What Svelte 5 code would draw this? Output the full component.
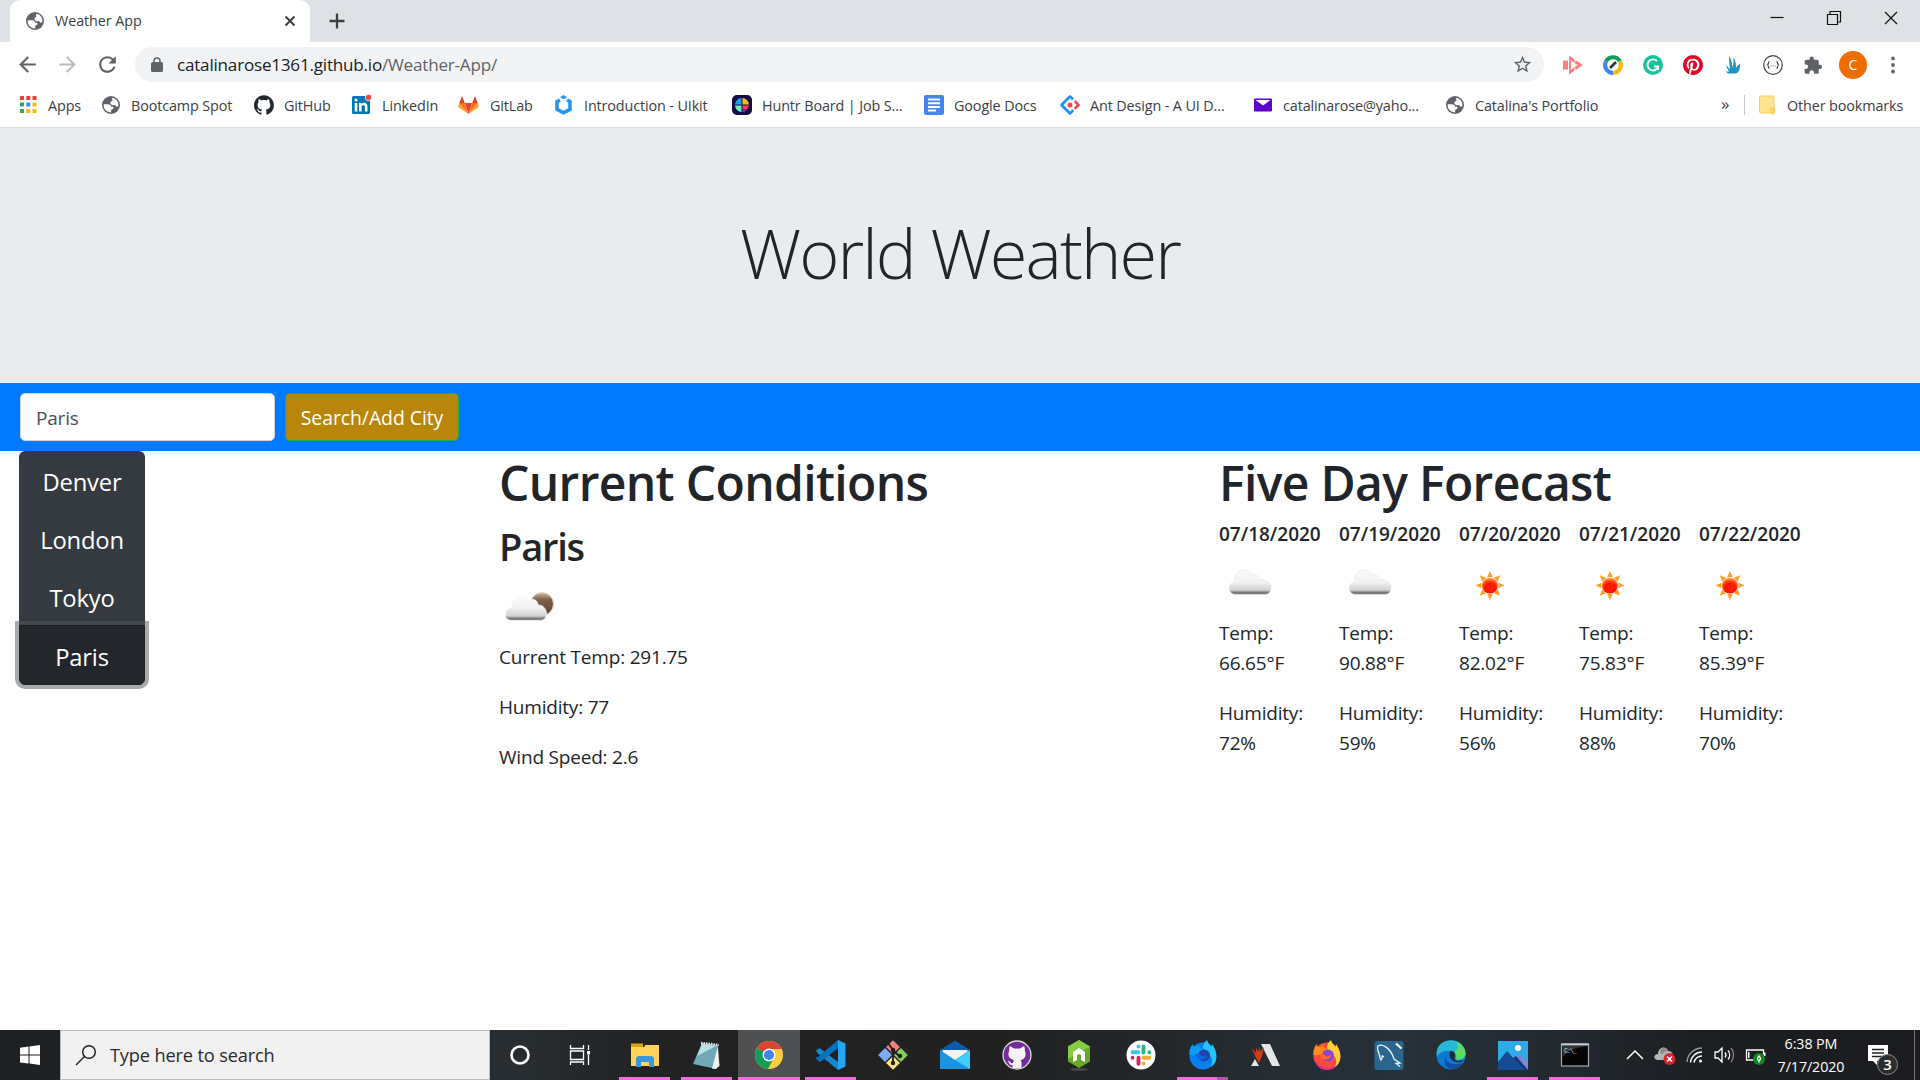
<script>
  const bookmarks = [
    ['apps', 'Apps'],
    ['globe', 'Bootcamp Spot'],
    ['github', 'GitHub'],
    ['linkedin', 'LinkedIn'],
    ['gitlab', 'GitLab'],
    ['uikit', 'Introduction - UIkit'],
    ['huntr', 'Huntr Board | Job S...'],
    ['docs', 'Google Docs'],
    ['ant', 'Ant Design - A UI D...'],
    ['yahoo', 'catalinarose@yaho...'],
    ['globe', "Catalina's Portfolio"]
  ];
  const extensions = ['cast', 'checker', 'grammarly', 'pinterest', 'flame', 'braces', 'puzzle'];
  const cities = ['Denver', 'London', 'Tokyo', 'Paris'];
  const forecast = [
    { date: '07/18/2020', sky: 'cloud', temp: '66.65', humidity: 72 },
    { date: '07/19/2020', sky: 'cloud', temp: '90.88', humidity: 59 },
    { date: '07/20/2020', sky: 'sun', temp: '82.02', humidity: 56 },
    { date: '07/21/2020', sky: 'sun', temp: '75.83', humidity: 88 },
    { date: '07/22/2020', sky: 'sun', temp: '85.39', humidity: 70 }
  ];
  const tasks = [
    ['explorer', 'open'],
    ['notepad', 'open'],
    ['chrome', 'active'],
    ['vscode', 'open'],
    ['git', ''],
    ['mail', ''],
    ['desktop', ''],
    ['node', ''],
    ['slack', ''],
    ['foxdev', 'open multi'],
    ['arena', ''],
    ['firefox', ''],
    ['mysql', ''],
    ['edge', ''],
    ['photos', 'open'],
    ['cmd', 'open']
  ];
  const octocat =
    'M12 .297c-6.63 0-12 5.373-12 12 0 5.303 3.438 9.8 8.205 11.385.6.113.82-.258.82-.577 0-.285-.01-1.04-.015-2.04-3.338.724-4.042-1.61-4.042-1.61C4.422 18.07 3.633 17.7 3.633 17.7c-1.087-.744.084-.729.084-.729 1.205.084 1.838 1.236 1.838 1.236 1.07 1.835 2.809 1.305 3.495.998.108-.776.417-1.305.76-1.605-2.665-.3-5.466-1.332-5.466-5.93 0-1.31.465-2.38 1.235-3.22-.135-.303-.54-1.523.105-3.176 0 0 1.005-.322 3.3 1.23.96-.267 1.98-.399 3-.405 1.02.006 2.04.138 3 .405 2.28-1.552 3.285-1.23 3.285-1.23.645 1.653.24 2.873.12 3.176.765.84 1.23 1.91 1.23 3.22 0 4.61-2.805 5.625-5.475 5.92.42.36.81 1.096.81 2.22 0 1.606-.015 2.896-.015 3.286 0 .315.21.69.825.57C20.565 22.092 24 17.592 24 12.297c0-6.627-5.373-12-12-12';
</script>

{#snippet small(name)}
  <svg class="ico" viewBox="0 0 20 20">
    {#if name === 'globe'}
      <circle cx="10" cy="10" r="9" fill="#5f6368" />
      <path fill="#fff" d="M2.700 9.200H7c2 0 3 .8 3.200 2.600h2.200c.4 1.800-.5 2.600-2.200 2.900v2.800C5.500 17.500 2.200 13.600 2.700 9.200M11.600 2.700C15.500 3.400 18 7 17.300 11.200c-1.600.9-2.600.3-3.300-1.100-2 .3-3.800.1-4.500-1.600-.3-1.400.4-2.200 2-2.400-.900-1.200-.600-2.300.100-3.400" />
    {:else if name === 'apps'}
      <g fill="#ea4335"><path d="M2 1h4v4H2zM8.300 1h4v4h-4zM14.500 1h4v4h-4z" /></g>
      <g fill="#34a853"><path d="M2 7.500h4v4H2zM2 14h4v4H2z" /></g>
      <path fill="#4285f4" d="M8.300 7.500h4v4h-4z" />
      <path fill="#fbbc04" d="M14.500 7.500h4v4h-4zM8.300 14h4v4h-4zM14.500 14h4v4h-4z" />
    {:else if name === 'github'}
      <path transform="scale(.83)" fill="#24292e" d={octocat} />
    {:else if name === 'linkedin'}
      <rect x="0" y="1" width="18" height="18" rx="1.500" fill="#0077b5" />
      <path fill="#fff" d="M2.700 8h2.600v8.500H2.700zM7 8h2.500v1.200c1.400-2.200 6-2 6 2.400v4.900h-2.600V12c0-2.500-3.300-2.300-3.300 0v4.500H7z" />
      <circle cx="4" cy="5" r="1.500" fill="#fff" />
      <circle cx="16.500" cy="2.500" r="3.200" fill="#e8453c" stroke="#fff" stroke-width=".8" />
    {:else if name === 'gitlab'}
      <path fill="#e24329" d="M8.500 19L4.800 8h7.400z" />
      <path fill="#fc6d26" d="M8.500 19L-1 8h5.800zM8.500 19L18 8h-5.800z" />
      <path fill="#fca326" d="M8.500 19L-1.800 12 -.700 8zM8.500 19L18.800 12 17.700 8z" />
      <path fill="#e24329" d="M-.700 8L2 1l2.800 7zM17.700 8L15 1l-2.800 7z" />
    {:else if name === 'uikit'}
      <path fill="none" stroke="#2396f3" stroke-width="3.600" d="M6 5L3 6.800v7.500l6.500 3.500 6.500-3.500V6.500l-4-2.200" />
      <path fill="#2396f3" d="M6 2.200L9.500 0 13 2.200 9.500 4.300z" />
      <path stroke="#fff" stroke-width="1.200" d="M11.500 6.500L15 1" />
    {:else if name === 'huntr'}
      <rect width="20" height="20" rx="5" fill="#170b45" />
      <path fill="#12a5e8" d="M9.500 3v6.500H3A7 7 0 0 1 9.500 3" />
      <path fill="#ffbe0b" d="M10.500 3v6.500H17A7 7 0 0 0 10.500 3" />
      <path fill="#6df0c2" d="M9.500 10.500H3a7 7 0 0 0 6.500 6.500" />
      <path fill="#ff3764" d="M10.500 10.500H17l-2 4h-4.500z" />
      <path fill="#7a4df2" d="M10.500 15.200h4a7 7 0 0 1-4 1.800z" />
    {:else if name === 'docs'}
      <rect width="20" height="20" rx="2" fill="#4285f4" />
      <path stroke="#fff" stroke-width="2" d="M4 4.500h12M4 8.200h12M4 11.900h12M4 15.600h8" />
    {:else if name === 'ant'}
      <path fill="none" stroke="#1890ff" stroke-width="2.600" stroke-linejoin="round" d="M13 4.300L10 1.500 1.500 10l8.500 8.500 3.300-3.300" />
      <path fill="none" stroke="#f5424f" stroke-width="2.600" stroke-linecap="round" d="M15.500 6.800l3 3.200-3 3.200" />
      <circle cx="10" cy="10" r="2.500" fill="#f5424f" />
    {:else if name === 'yahoo'}
      <rect x="1" y="3.500" width="18" height="13" rx="1" fill="#5f01d1" />
      <path fill="#fff" d="M2.500 5h15L10 10.500z" />
    {:else if name === 'cast'}
      <path fill="#ff7e7e" d="M0 5.500h5v9H0zM6 .500L19.800 10 6 19.500v-5h2.200l6.300-4.500-6.300-4.500H6z" />
      <path fill="#ff7e7e" d="M6 5.500h2v9H6z" />
      <path stroke="#fff" d="M12 4v3M12 13v3" />
    {:else if name === 'checker'}
      <g fill="none" stroke-width="4">
        <path stroke="#109d58" d="M3 6.300a8 8 0 0 1 14 0" />
        <path stroke="#fbb905" d="M17 6.300A8 8 0 0 1 10 18" />
        <path stroke="#4285f4" d="M10 18A8 8 0 0 1 3 6.300" />
      </g>
      <path stroke="#333" stroke-width="2.700" d="M7 13l6-6" />
    {:else if name === 'grammarly'}
      <circle cx="10" cy="10" r="10" fill="#15c39a" />
      <path fill="none" stroke="#fff" stroke-width="1.900" d="M14 6.100A5.500 5.500 0 1 0 15.300 11.500H11M15 10.800V15" />
    {:else if name === 'pinterest'}
      <path transform="scale(.833)" fill="#e60023" d="M12.017 0C5.396 0 .029 5.367.029 11.987c0 5.079 3.158 9.417 7.618 11.162-.105-.949-.199-2.403.041-3.439.219-.937 1.406-5.957 1.406-5.957s-.359-.72-.359-1.781c0-1.663.967-2.911 2.168-2.911 1.024 0 1.518.769 1.518 1.688 0 1.029-.653 2.567-.992 3.992-.285 1.193.6 2.165 1.775 2.165 2.128 0 3.768-2.245 3.768-5.487 0-2.861-2.063-4.869-5.008-4.869-3.41 0-5.409 2.562-5.409 5.199 0 1.033.394 2.143.889 2.741.099.12.112.225.085.345-.09.375-.293 1.199-.334 1.363-.053.225-.172.271-.401.165-1.495-.69-2.433-2.878-2.433-4.646 0-3.776 2.748-7.252 7.92-7.252 4.158 0 7.392 2.967 7.392 6.923 0 4.135-2.607 7.462-6.233 7.462-1.214 0-2.354-.629-2.758-1.379l-.749 2.848c-.269 1.045-1.004 2.352-1.498 3.146 1.123.345 2.306.535 3.55.535 6.607 0 11.985-5.365 11.985-11.987C23.97 5.39 18.592.026 11.985.026L12.017 0z" />
    {:else if name === 'flame'}
      <path fill="#1f93c4" d="M6.500 1c2 4 2.500 8 3 11.500C10.500 9 10.800 6 10.300 2.500c2.500 3.500 3 7 2.500 10.500 1.500-2 2.700-3 4.500-4.500-.300 5-1 9.500-5 10H5L3 16.500h3.500C4.500 15 3.500 12.500 3.500 9.500c1 2 2 3.500 3.500 5C6.500 10 5.500 5 6.500 1" />
    {:else if name === 'braces'}
      <circle cx="10" cy="10" r="9.300" fill="#fff" stroke="#444" stroke-width="1.200" />
      <path fill="none" stroke="#444" stroke-width="1.200" d="M6.500 6.500C4.500 6.500 6.500 10 4 10c2.500 0 .500 3.500 2.500 3.500M13.500 6.500c2 0 0 3.500 2.500 3.500-2.500 0-.500 3.500-2.500 3.500" />
      <path stroke="#777" d="M7.500 11h1M9.600 11h1M11.700 11h1" />
    {:else if name === 'puzzle'}
      <path transform="translate(0 .600) scale(.83)" fill="#5f6368" d="M20.500 11H19V7c0-1.100-.9-2-2-2h-4V3.500C13 2.120 11.880 1 10.500 1S8 2.120 8 3.500V5H4c-1.100 0-1.990.9-1.990 2v3.800H3.500c1.490 0 2.700 1.210 2.700 2.700s-1.210 2.700-2.700 2.700H2V20c0 1.100.9 2 2 2h3.800v-1.500c0-1.490 1.210-2.700 2.700-2.700 1.490 0 2.700 1.210 2.700 2.700V22H17c1.100 0 2-.9 2-2v-4h1.500c1.380 0 2.500-1.120 2.500-2.500S21.880 11 20.500 11z" />
    {/if}
  </svg>
{/snippet}

{#snippet weather(kind)}
  <svg class="sky" viewBox="0 0 62 62">
    <defs>
      <linearGradient id="cloudFill" x1="0" y1="0" x2="0" y2="1">
        <stop offset="0" stop-color="#fbfbfb" /><stop offset=".5" stop-color="#f1f1f1" />
        <stop offset=".82" stop-color="#d2d2d2" /><stop offset=".92" stop-color="#777" /><stop offset="1" stop-color="#888" />
      </linearGradient>
      <linearGradient id="moonFill" x1="0" y1="0" x2="0" y2="1">
        <stop offset="0" stop-color="#d8bea8" /><stop offset=".3" stop-color="#806149" /><stop offset="1" stop-color="#59402e" />
      </linearGradient>
      <radialGradient id="sunFill" cx=".5" cy=".7" r=".7">
        <stop offset=".5" stop-color="#ff1800" /><stop offset=".75" stop-color="#ff5a10" /><stop offset="1" stop-color="#ffc070" />
      </radialGradient>
    </defs>
    {#if kind === 'night'}
      <circle cx="43" cy="24" r="11.500" fill="url(#moonFill)" stroke="#e8d9cc" />
      <path fill="url(#cloudFill)" stroke="#fff" stroke-width=".6" d="M13 40.500c-9 0-9-11-1-13C13 14 26 12 30 20c4-2 9 0 9 5 9-1 13 15 2 15.500z" />
    {:else if kind === 'cloud'}
      <path fill="url(#cloudFill)" stroke="#e3e3e3" stroke-width=".6" d="M16 38.500c-8-1-7-11.500-.500-13C16 12.500 28 10.500 32 18.500c4-1.500 7 0 8 5 6-.500 11 2 12 7 0 5-2 7.500-5 8z" />
    {:else}
      <g transform="translate(0 -1)">
        <path fill="#ff9f2e" d="M31 16l2.800 6h-5.600zM31 45l2.800-6h-5.600zM16.500 30.500l6-2.800v5.600zM45.500 30.500l-6-2.800v5.600zM20.800 20.300l6.400 2.400-4 4zM41.200 20.300l-6.400 2.400 4 4zM20.800 40.700l6.400-2.400-4-4zM41.200 40.700l-6.400-2.400 4-4z" />
        <circle cx="31" cy="30.500" r="8" fill="url(#sunFill)" />
      </g>
    {/if}
  </svg>
{/snippet}

{#snippet app(name)}
  <svg class="app" viewBox="0 0 30 30">
    {#if name === 'explorer'}
      <path fill="#e0a10a" d="M1 3.500h12v5H1z" />
      <path fill="#ffd35c" d="M1 7h13l1.500-2H29v21H1z" />
      <path fill="#3b97dd" d="M6 27V18l2-2h14l2 2v9h-5v-5h-8v5z" />
    {:else if name === 'notepad'}
      <path fill="#a88b52" d="M25 4l3 22-5 2z" />
      <path fill="#71a9b8" d="M10 3l-9 21 21 4.500L26 5z" />
      <path fill="#b9dde4" d="M10 4l-5 12 19-10z" />
      <path fill="#eef4f5" d="M20 28.500L26 6l1 20-3 3z" />
      <path stroke="#e8e8e8" stroke-width="2.500" stroke-dasharray="1.500 1" d="M9 3l18 2" />
    {:else if name === 'chrome'}
      <circle cx="15" cy="15" r="14" fill="#ffcd40" />
      <path fill="#db4437" d="M15 15L2.900 8A14 14 0 0 1 27.600 9H15z" />
      <path fill="#109d58" d="M15 15L2.900 8A14 14 0 0 0 14 29l5.500-10.500z" />
      <circle cx="15" cy="15" r="6.500" fill="#fff" /><circle cx="15" cy="15" r="5.100" fill="#4285f4" />
    {:else if name === 'vscode'}
      <path fill="#0b75bd" d="M22 0L3 18.500 0 16.500 1 20l3 2L22 8z" />
      <path fill="#1588ce" d="M0 10.500L3.500 8 22 22v8L1.500 13z" />
      <path fill="#0071ba" d="M0 18.500L22 0v8L4 22z" />
      <path fill="#27a6f2" d="M22 0l7.500 3.500v23L22 30z" />
    {:else if name === 'git'}
      <g transform="rotate(45 15 15)">
        <path fill="#f28080" d="M4.500 4.500h9.800v9.800H4.500z" /><path fill="#84cf5c" d="M15.700 4.500h9.800v9.800h-9.800z" />
        <path fill="#7eacf5" d="M4.500 15.700h9.800v9.800H4.500z" /><path fill="#ffe27a" d="M15.700 15.700h9.800v9.800h-9.800z" />
      </g>
      <path fill="none" stroke="#1d1d1d" stroke-width="1.800" d="M10 3l5 7v13M15 10l6 6" />
      <g fill="#1d1d1d"><circle cx="15" cy="10" r="2.200" /><circle cx="22" cy="16" r="2.200" /><circle cx="15" cy="23" r="2.200" /></g>
    {:else if name === 'mail'}
      <path fill="#0a5bab" d="M0 10L15 .500 30 10v6H0z" />
      <path fill="#f3f3f3" d="M2.500 10h25v10h-25z" />
      <path fill="#1a94e0" d="M0 10v19h30V10L15 20z" />
      <path fill="#40cdfb" d="M30 10v19L15 20z" />
    {:else if name === 'desktop'}
      <circle cx="15" cy="15" r="14" fill="#752b9a" stroke="#ddd" stroke-width="1.300" />
      <path fill="#f4f4f4" d="M8 6l4 2.500h6L22 6c1 2 1 3 .800 4.500C25 17 22 19 18.500 20c1.500 2 1 5 1 8h-9v-3c-4 .500-3-3-5-4 3-.500 3 3 5.500 2 0-1 .500-2 1-3C7.500 19 5 16 7.200 10.500 7 9 7 8 8 6" />
    {:else if name === 'node'}
      <ellipse cx="15" cy="29.500" rx="9" ry="1.500" fill="#474947" />
      <path fill="#65ab27" d="M15 0l11 6.500v15L15 28 4 21.500v-15z" />
      <path fill="#86cc45" d="M15 0l11 6.500L4 19V6.500z" />
      <path fill="#fff" d="M9 12l6-4 6 4v10l-4-2v-5l-2-1-2 1v5l-4 2z" />
    {:else if name === 'slack'}
      <circle cx="15" cy="15" r="14.500" fill="#fff" />
      <g stroke-width="3.900" stroke-linecap="round">
        <path stroke="#36c5f0" d="M12.500 6.500v.100M6.500 12.300h6" /><path stroke="#2eb67d" d="M17.500 6.500v6M23.300 12.300v.100" />
        <path stroke="#ecb22e" d="M17.500 17.700h6M17.500 23.500v.100" /><path stroke="#e01e5a" d="M12.500 17.700v6M6.500 17.700v.100" />
      </g>
    {:else if name === 'foxdev'}
      <circle cx="15" cy="16" r="13.500" fill="#0881ee" />
      <path fill="#22c5fc" d="M15 8c0-5 3-7 4-8 1 4 3 4 4 7 1-1 1-2 1-3 5 7 7 18-1 23 3-7 0-11-3-13-2-1-3-3-5-6" />
      <path fill="#0a9ff6" d="M1.500 15C1 9 3 6 5 4c0 3 1 3 3 3l3-2c0 3 2 4 5 4l-3 4-6 2z" />
      <circle cx="16" cy="15.500" r="6" fill="#2440b0" />
      <path fill="#076adf" d="M7 14c3-1 5 0 6 2 3 1 5 0 6-1 0 5-9 7-12-1" />
    {:else if name === 'arena'}
      <path fill="#e5e5e5" d="M11 4h9l10 22h-8zM1 26l4-7 4 7z" />
      <path fill="#d43c18" d="M2 8l4 5V7l2 5 2-6v6l4-5-2 9-3 7-4-7z" />
    {:else if name === 'firefox'}
      <circle cx="15" cy="16" r="13.500" fill="#ff4b3f" />
      <path fill="#e52e87" d="M3 20c5 9 19 11 24 1-1 6-6 9-12 9S5 27 3 20" />
      <path fill="#ffcf3a" d="M15 8c0-5 3-7 4-8 1 4 3 4 4 7 1-1 1-2 1-3 5 7 7 18-1 23 3-7 0-11-3-13-2-1-3-3-5-6" />
      <path fill="#ff8d1c" d="M1.500 15C1 9 3 6 5 4c0 3 1 3 3 3l3-2c0 3 2 4 5 4l-3 4-6 2z" />
      <circle cx="16" cy="15.500" r="6" fill="#8a45d5" />
      <path fill="#ff6a22" d="M7 14c3-1 5 0 6 2 3 1 5 0 6-1 0 5-9 7-12-1" />
    {:else if name === 'mysql'}
      <rect x=".500" y="1" width="29" height="29" rx="3" fill="#2b668e" />
      <path fill="none" stroke="#eaf3f8" stroke-width="1.300" d="M6 18c0-4-4-9-2-12 5-3 13 3 16 13l6 4-4 .500 4 3M6 18c1 3 1 3 2 0 0-3 0-3 2-1" />
      <path stroke="#fff" stroke-width="2.200" d="M22 3.500l5.500 5" />
    {:else if name === 'edge'}
      <circle cx="15" cy="15" r="14.500" fill="#0d79d5" />
      <path fill="#27b8d8" d="M.700 12C2-3 28-5 29.500 14c0 6-7 7-10 5 1-5-1-8-5-8-6-1-12 2-13.800 6z" />
      <path fill="#5bdc63" d="M20 1.500C28 4 31 12 29 16c-2 4-8 4-9 3 1-3 0-6-2-7 4-2 5-6 2-10.500" />
      <path fill="#124d9f" d="M11 14c-4 7 4 13 16 9-6 9-20 8-18-4 0-2 1-4 2-5" />
      <path fill="#222a32" d="M15 11c5 0 4 4 3.500 8 2 3 6 2 9 1-2 4-13 3-14-5 0-2 0-3 1.500-4" />
    {:else if name === 'photos'}
      <path fill="#2bace9" d="M0 1h30v29H0z" /><path fill="#7d87d4" d="M14 20l7-6 9 8v8H14z" />
      <path fill="#164a95" d="M0 22L9 11l17 19H0z" /><path fill="#0f397c" d="M15 18l3-2 12 14H26z" />
      <circle cx="20" cy="8" r="3" fill="#fff" />
    {:else if name === 'cmd'}
      <rect x="1.500" y="4" width="27" height="22" fill="#050505" stroke="#9eacb2" stroke-width="1.200" />
      <path fill="#c7d0d4" d="M1.500 3.500h27v2h-27z" />
      <path fill="#343434" d="M2.500 6h25c-12 2-21 4-25 12z" />
      <text x="4" y="12.500" font-size="6.500" fill="#ddd" font-family="Liberation Mono, monospace" letter-spacing="-1">C:\_</text>
    {/if}
  </svg>
{/snippet}

<div class="screen">
  <header class="tabs">
    <div class="tab">
      {@render small('globe')}
      <span>Weather App</span>
      <svg class="tabx" viewBox="0 0 12 12"><path d="M1.500 1.500l9 9M10.500 1.500l-9 9" /></svg>
    </div>
    <svg class="plus" viewBox="0 0 16 16"><path d="M8 .500v15M.500 8h15" /></svg>
    <div class="controls">
      <svg viewBox="0 0 14 14"><path d="M.500 6.500h13" /></svg>
      <svg viewBox="0 0 14 14"><path d="M.500 3.500h10v10H.500zM3 3V.500h10.500v10.500H11" /></svg>
      <svg viewBox="0 0 14 14"><path d="M1 1l12 12M13 1L1 13" /></svg>
    </div>
  </header>

  <div class="toolbar">
    <svg class="nav" viewBox="0 0 24 24"><path d="M20 11H7.830l5.590-5.590L12 4l-8 8 8 8 1.410-1.410L7.830 13H20v-2z" /></svg>
    <svg class="nav off" viewBox="0 0 24 24"><path d="M4 11h12.170l-5.590-5.590L12 4l8 8-8 8-1.410-1.410L16.170 13H4v-2z" /></svg>
    <svg class="nav" viewBox="0 0 24 24"><path d="M17.650 6.350C16.200 4.900 14.210 4 12 4c-4.420 0-7.990 3.580-7.990 8s3.570 8 7.990 8c3.730 0 6.840-2.550 7.730-6h-2.080c-.820 2.330-3.040 4-5.650 4-3.310 0-6-2.690-6-6s2.690-6 6-6c1.660 0 3.140.690 4.220 1.780L13 11h7V4l-2.350 2.350z" /></svg>
    <div class="omnibox">
      <svg class="lock" viewBox="0 0 12 15"><path fill="#5f6368" d="M1.500 5h9A1.500 1.500 0 0 1 12 6.500v7a1.500 1.500 0 0 1-1.500 1.500h-9A1.500 1.500 0 0 1 0 13.500v-7A1.500 1.500 0 0 1 1.500 5" /><path fill="none" stroke="#5f6368" stroke-width="1.500" d="M3 6V4a3 3 0 0 1 6 0v2" /></svg>
      <span class="url">catalinarose1361.github.io<i>/Weather-App/</i></span>
      <svg class="star" viewBox="0 0 24 24"><path d="M22 9.240l-7.190-.620L12 2 9.190 8.630 2 9.240l5.460 4.730L5.820 21 12 17.270 18.180 21l-1.630-7.030L22 9.240zM12 15.400l-3.760 2.270 1-4.280-3.320-2.880 4.380-.380L12 6.100l1.710 4.040 4.380.380-3.320 2.880 1 4.280L12 15.400z" /></svg>
    </div>
    <div class="exts">
      {#each extensions as name}<span>{@render small(name)}</span>{/each}
      <span><b class="avatar">C</b></span>
      <span><svg class="ico" viewBox="0 0 20 20" fill="#5f6368"><circle cx="10" cy="3.500" r="1.900" /><circle cx="10" cy="10" r="1.900" /><circle cx="10" cy="16.500" r="1.900" /></svg></span>
    </div>
  </div>

  <nav class="bookmarks">
    {#each bookmarks as [icon, label]}
      <span class="mark">{@render small(icon)}<span>{label}</span></span>
    {/each}
    <span class="more">»</span>
    <span class="mark other">
      <svg class="ico" viewBox="0 0 20 20"><path fill="#ffe48f" stroke="#f6cf58" d="M2.500 2.500A1.500 1.500 0 0 1 4 1h12a1 1 0 0 1 1 1v16H4a1.500 1.500 0 0 1-1.500-1.500z" /><path fill="#fddc6c" stroke="#f3c94f" d="M14 13h3.500v4.500a1.700 1.700 0 0 1-3.500 0z" /></svg>
      <span>Other bookmarks</span>
    </span>
  </nav>

  <section class="jumbotron"><h1>World Weather</h1></section>

  <form class="search">
    <div class="field">Paris</div>
    <div class="submit">Search/Add City</div>
  </form>

  <main>
    <div class="cities">
      {#each cities as city}<div class="city" class:selected={city === 'Paris'}>{city}</div>{/each}
    </div>
    <section>
      <h1>Current Conditions</h1>
      <h2>Paris</h2>
      {@render weather('night')}
      <p>Current Temp: 291.75</p>
      <p>Humidity: 77</p>
      <p>Wind Speed: 2.6</p>
    </section>
    <section>
      <h1>Five Day Forecast</h1>
      <div class="days">
        {#each forecast as day}
          <article>
            <h5>{day.date}</h5>
            {@render weather(day.sky)}
            <p>Temp:<br />{day.temp}°F</p>
            <p>Humidity:<br />{day.humidity}%</p>
          </article>
        {/each}
      </div>
    </section>
  </main>

  <footer class="taskbar">
    <div class="start"><svg viewBox="0 0 20 20"><path fill="#fff" d="M0 2.800L8.500 1.600v8H0zM9.500 1.400L20 0v9.600H9.500zM0 10.600h8.500v8L0 17.400zM9.500 10.600H20V20L9.500 18.600z" /></svg></div>
    <div class="find">
      <svg viewBox="0 0 22 22"><circle cx="14" cy="8" r="6.300" /><path d="M9.500 12.500L1 21" /></svg>
      <span>Type here to search</span>
    </div>
    <div class="sys"><svg viewBox="0 0 22 22"><circle cx="11" cy="11" r="8.500" stroke-width="2.600" /></svg></div>
    <div class="sys"><svg viewBox="0 0 22 22"><path stroke-width="1.300" d="M1.500 1v3.500h13V1M1.500 7h13v8.500h-13zM1.500 21v-3h13v3M19.500 1v5M19.500 11v10" /><path fill="#fff" stroke="none" d="M18 7h3v3.500h-3z" /></svg></div>
    <div class="apps">
      {#each tasks as [name, state]}<div class="task {state}">{@render app(name)}</div>{/each}
    </div>
    <div class="tray">
      <svg class="chev" viewBox="0 0 18 22"><path fill="none" stroke="#fff" stroke-width="1.500" d="M1 15l8-8 8 8" /></svg>
      <svg class="t" viewBox="0 0 22 22">
        <path fill="#b5b5b5" d="M4 16c-5 0-5-6 0-6C4 3 12 1 14 7c6-1 7 9 1 9z" /><path fill="#8c8c8c" d="M6 8C7 2 14 3 14 7c-4 0-5 3-7 4z" />
        <circle cx="15.500" cy="15" r="6" fill="#d8232e" /><path stroke="#fff" stroke-width="1.600" d="M13 12.500l5 5M18 12.500l-5 5" />
      </svg>
      <svg class="t" viewBox="0 0 22 22" fill="none" stroke="#fff" stroke-width="1.400">
        <path stroke="#999" d="M3 18A15 15 0 0 1 18 4" /><path d="M6.500 18.500A11.500 11.500 0 0 1 18 8M10 18.500A8 8 0 0 1 18 12" /><circle cx="16.500" cy="17" r="1.500" fill="#fff" stroke="none" />
      </svg>
      <svg class="t" viewBox="0 0 22 22" fill="none" stroke="#fff" stroke-width="1.300">
        <path d="M1 8h3l4-4v14l-4-4H1zM11 8.500a4 4 0 0 1 0 5M14 6.500a7 7 0 0 1 0 9" /><path stroke="#888" d="M17 4a11 11 0 0 1 0 14" />
      </svg>
      <svg class="t" viewBox="0 0 22 22">
        <path fill="none" stroke="#fff" stroke-width="1.300" d="M12 16H2.500V6h17v4.500" /><path fill="#fff" d="M4 8h1.500v6H4zM20 8.500h1.500V12H20z" />
        <circle cx="15" cy="15" r="6" fill="#0b8a20" /><path fill="none" stroke="#fff" stroke-width="1.400" d="M15 18.500v-2c-2-1-2-2.500 0-4.500 2 2 2 3.500 0 4.500" />
      </svg>
    </div>
    <div class="clock"><span>6:38 PM</span><span>7/17/2020</span></div>
    <svg class="note" viewBox="0 0 32 32">
      <path fill="#fff" d="M1 2h20v16H10v4l-4-4H1z" /><path stroke="#202124" stroke-width="1.300" d="M5 6.500h12M5 10h12M5 13.500h12" />
      <circle cx="20.500" cy="21.500" r="10" fill="#2b2c2e" stroke="#8c8c8c" /><text x="20.500" y="27" text-anchor="middle" font-size="15" font-weight="600" fill="#fff">3</text>
    </svg>
  </footer>
</div>

<style>
  :global(body) { margin: 0; overflow: hidden; }
  .screen {
    width: 1920px; height: 1080px; display: flex; flex-direction: column; background: #fff;
    font-family: 'Open Sans', 'Noto Sans', sans-serif; color: #212529; white-space: nowrap; overflow: hidden;
  }
  .screen * { box-sizing: border-box; }
  svg { flex: none; display: block; overflow: visible; }
  h1, h2, h5, p { margin: 0; }
  .ico { width: 20px; height: 20px; }

  .tabs { height: 42px; background: #dee1e6; display: flex; align-items: center; padding-left: 10px; }
  .tab {
    width: 300px; height: 42px; background: #fff; border-radius: 10px 10px 0 0; display: flex; align-items: center;
    padding: 0 14px 0 15px; font-size: 14.3px; letter-spacing: -0.05px; color: #3c4043;
  }
  .tab span { flex: 1; padding: 0 0 2px 10px; }
  .tabx { width: 12px; height: 12px; stroke: #3c4043; stroke-width: 2; }
  .plus { width: 16px; height: 16px; margin-left: 19px; stroke: #3c4043; stroke-width: 2.3; }
  .controls { margin-left: auto; display: flex; gap: 43px; padding: 0 22px 6px 0; }
  .controls svg { width: 14px; height: 14px; fill: none; stroke: #111; stroke-width: 1.2; }

  .toolbar { height: 45px; display: flex; align-items: center; padding-left: 15px; }
  .nav { width: 25px; height: 25px; margin-right: 15px; fill: #5f6368; }
  .nav.off { fill: #babcbe; }
  .omnibox { width: 1409px; height: 35px; border-radius: 18px; background: #f1f3f4; display: flex; align-items: center; padding: 0 11px 0 16px; }
  .lock { width: 12px; height: 15px; }
  .url { flex: 1; padding-left: 14px; font-size: 17.1px; letter-spacing: -0.22px; color: #202124; }
  .url i { font-style: normal; color: #5f6368; }
  .star { width: 21px; height: 21px; fill: #5f6368; }
  .exts { display: flex; margin-left: 9px; }
  .exts span { width: 40px; display: flex; justify-content: center; align-items: center; }
  .avatar { width: 28px; height: 28px; border-radius: 50%; background: #ef6c00; color: #fff; font: 400 14px/28px 'Open Sans', sans-serif; text-align: center; }

  .bookmarks {
    height: 41px; border-bottom: 1px solid #dadce0; display: grid; align-items: center; padding: 0 0 4px 18px;
    grid-template-columns: 83px 153px 98px 108px 94px 178px 192px 136px 193px 192px 276px 23px 1fr;
    font-size: 14.4px; letter-spacing: -0.13px; color: #3c4043;
  }
  .mark { display: flex; align-items: center; gap: 10px; }
  .more { font-size: 17px; line-height: 16px; padding-bottom: 3px; }
  .other { border-left: 1px solid #c6c8cc; padding-left: 12px; height: 20px; }

  .jumbotron { height: 255px; background: #e9ecef; display: flex; justify-content: center; align-items: center; padding: 0 0 5px; }
  .jumbotron h1 { font-size: 68.5px; font-weight: 300; letter-spacing: -1.9px; line-height: 84px; }

  .search { height: 68px; margin: 0; background: #007bff; display: flex; align-items: center; gap: 10px; padding-left: 20px; font-size: 19px; letter-spacing: -0.2px; }
  .field { width: 255px; height: 48px; border: 1px solid #ced4da; border-radius: 5px; background: #fff; color: #495057; padding: 1px 15px; line-height: 46px; }
  .submit { width: 174px; height: 48px; border: 1px solid #28a745; border-radius: 5px; background: #b8860b; color: #fff; text-align: center; font-size: 19.4px; letter-spacing: -0.05px; line-height: 48px; }

  main { flex: 1; display: grid; grid-template-columns: 480px 720px auto; padding-left: 19px; }
  main section { padding-top: 1px; }
  .cities { width: 126px; }
  .city { height: 60px; margin-bottom: -2px; background: #343a40; color: #fff; font-size: 23.8px; letter-spacing: -0.2px; line-height: 62px; text-align: center; }
  .city:first-child { border-radius: 6px 6px 0 0; }
  .selected { position: relative; background: #23272b; border: 1px solid #1d2124; border-radius: 0 0 6px 6px; box-shadow: 0 0 0 4px rgba(82, 88, 93, 0.5); }

  main h1 { font-size: 48px; font-weight: 600; letter-spacing: -0.65px; line-height: 61px; margin-bottom: 9px; }
  h2 { font-size: 38px; font-weight: 600; letter-spacing: -1.2px; line-height: 48px; margin-bottom: 10px; }
  .sky { width: 62px; height: 62px; }
  p { font-size: 19px; letter-spacing: -0.2px; line-height: 30px; margin-bottom: 20px; }
  .days { display: grid; grid-template-columns: repeat(5, 120px); }
  h5 { font-size: 19px; font-weight: 600; letter-spacing: 0; line-height: 24px; margin-bottom: 10px; }

  .taskbar { height: 50px; display: flex; background: linear-gradient(90deg, #1e2022 0, #272d31 27%, #212223 34%, #212121 52%, #27313a 73%, #22282e 82%, #1b1d20 90%); color: #fff; }
  .start { width: 60px; display: flex; align-items: center; justify-content: center; }
  .start svg { width: 20px; height: 20px; }
  .find { width: 430px; background: #f1f1f1; border: 1px solid #bbb; display: flex; align-items: center; padding-left: 14px; color: #2b2b2b; font-size: 18.2px; letter-spacing: -0.15px; }
  .find svg { width: 22px; height: 22px; fill: none; stroke: #222; stroke-width: 1.5; }
  .find span { padding: 0 0 1px 13px; }
  .sys { width: 60px; display: flex; align-items: center; justify-content: center; }
  .sys svg { width: 22px; height: 22px; fill: none; stroke: #fff; }
  .apps { display: flex; margin-left: 4px; }
  .task { width: 62px; display: flex; align-items: center; justify-content: center; }
  .app { width: 30px; height: 30px; }
  .open { background: linear-gradient(#f06be0, #f06be0) 5px 47px / 51px 3px no-repeat; }
  .multi { background: linear-gradient(90deg, #f06be0 40px, #b653ac 40px) 5px 47px / 51px 3px no-repeat; }
  .active { background: #4e5052; border-bottom: 3px solid #f06be0; padding-top: 3px; }
  .tray { display: flex; align-items: center; margin-left: 20px; gap: 8px; }
  .chev { width: 18px; height: 22px; margin-right: 2px; }
  .t { width: 22px; height: 22px; }
  .clock { width: 90px; display: flex; flex-direction: column; text-align: center; padding-top: 2px; font-size: 14.3px; letter-spacing: -0.1px; line-height: 23px; }
  .note { width: 32px; height: 32px; margin: 13px 0 0 11px; }
  .taskbar::after { content: ''; width: 1px; margin-left: 15px; background: #777; }
</style>
